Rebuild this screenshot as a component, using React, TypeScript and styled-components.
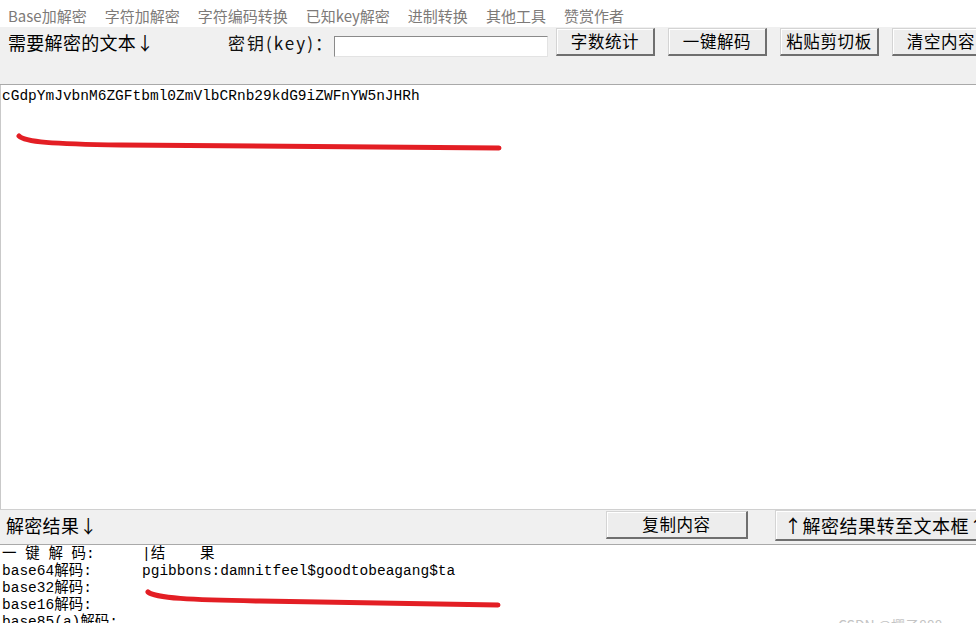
import React from "react";
import styled, { createGlobalStyle } from "styled-components";

const GlobalStyle = createGlobalStyle`
  html, body { margin: 0; padding: 0; background: #ffffff; overflow: hidden; }
  * { box-sizing: border-box; }
`;

const CJK = `"Noto Sans CJK SC", "Noto Sans", sans-serif`;
const MONO = `"Liberation Mono", "Noto Sans CJK SC", monospace`;

const Window = styled.div`
  width: 976px;
  height: 623px;
  display: flex;
  flex-direction: column;
  overflow: hidden;
  font-family: ${CJK};
  color: #000;
`;

const MenuBar = styled.nav`
  height: 27px;
  flex: 0 0 27px;
  background: #ffffff;
  display: flex;
  align-items: center;
  gap: 18px;
  padding: 3px 0 0 8px;
`;

const MenuItem = styled.span`
  font-size: 15px;
  color: #7d7a78;
  white-space: nowrap;
  line-height: 1;
`;

const ToolBar = styled.div`
  flex: 0 0 58px;
  background: #f0f0f0;
  border-bottom: 1px solid #a9a9a9;
  display: flex;
  align-items: flex-start;
  padding: 1px 0 0 8px;
  overflow: hidden;
`;

const Row = styled.div`
  height: 28px;
  display: flex;
  align-items: center;
  white-space: nowrap;
`;

const SectionLabel = styled.span<{ $w: number }>`
  flex: 0 0 ${(p) => p.$w}px;
  font-size: 18px;
  letter-spacing: 0.3px;
  line-height: 1;
  white-space: nowrap;
`;

const KeyLabel = styled.span`
  flex: 0 0 106px;
  font-size: 17px;
  letter-spacing: 2px;
  line-height: 1;
  color: #111;
`;

const KeyInput = styled.input`
  flex: 0 0 214px;
  height: 21px;
  align-self: flex-end;
  margin-bottom: -1px;
  margin-right: 8px;
  border-style: solid;
  border-width: 1px;
  border-color: #8a8a8a #e3e3e3 #e3e3e3 #8a8a8a;
  background: #fff;
  outline: none;
  padding: 0 2px;
`;

const Button = styled.button<{ $w: number; $h?: number; $gap?: number }>`
  flex: 0 0 ${(p) => p.$w}px;
  height: ${(p) => p.$h ?? 28}px;
  margin-right: ${(p) => p.$gap ?? 13}px;
  padding: 0;
  font-family: ${CJK};
  font-size: 16.5px;
  line-height: 1;
  color: #000;
  background: #ededed;
  border-style: solid;
  border-width: 1px 2px 2px 1px;
  border-color: #d4d4d4 #6f6f6f #6f6f6f #d4d4d4;
  box-shadow: inset 1px 1px 0 #ffffff;
  white-space: nowrap;
  letter-spacing: 0.6px;
`;

const WideButton = styled(Button)`
  font-size: 18px;
  text-align: left;
  padding-left: 8px;
  letter-spacing: 0.5px;
`;

const EditArea = styled.div`
  position: relative;
  flex: 1;
  background: #ffffff;
  border-left: 1px solid #c9c9c9;
  padding: 3px 0 0 1px;
  font-family: ${MONO};
  font-size: 14.5px;
  line-height: 17px;
  color: #000;
  white-space: pre;
`;

const ResultBar = styled.div`
  flex: 0 0 36px;
  background: #f0f0f0;
  border-top: 1px solid #d0d0d0;
  border-bottom: 1px solid #a9a9a9;
  display: flex;
  align-items: flex-start;
  padding: 1px 0 0 6px;
  overflow: hidden;
`;

const ResultArea = styled.div`
  position: relative;
  flex: 0 0 78px;
  background: #ffffff;
  padding: 1px 0 0 2px;
  overflow: hidden;
  font-family: ${MONO};
  font-size: 14.5px;
  line-height: 17px;
`;

const ResultLine = styled.div`
  display: grid;
  grid-template-columns: 140px auto;
  white-space: pre;
`;

const Scribble = styled.svg`
  position: absolute;
  left: 0;
  top: 0;
  pointer-events: none;
  overflow: visible;
`;

const Watermark = styled.span`
  position: absolute;
  left: 838px;
  top: 72px;
  font-family: ${CJK};
  font-size: 14px;
  color: #c4c4c4;
  white-space: nowrap;
`;

const menus = ["Base加解密", "字符加解密", "字符编码转换", "已知key解密", "进制转换", "其他工具", "赞赏作者"];

const results: [string, string][] = [
  ["一 键 解 码:", "|结    果"],
  ["base64解码:", "pgibbons:damnitfeel$goodtobeagang$ta"],
  ["base32解码:", ""],
  ["base16解码:", ""],
  ["base85(a)解码:", ""],
];

export default function App() {
  return (
    <>
      <GlobalStyle />
      <Window>
        <MenuBar>
          {menus.map((m) => (
            <MenuItem key={m}>{m}</MenuItem>
          ))}
        </MenuBar>
        <ToolBar>
          <Row>
            <SectionLabel $w={220}>需要解密的文本↓</SectionLabel>
            <KeyLabel>密钥(key)：</KeyLabel>
            <KeyInput />
            <Button $w={99}>字数统计</Button>
            <Button $w={99}>一键解码</Button>
            <Button $w={99}>粘贴剪切板</Button>
            <Button $w={99}>清空内容</Button>
          </Row>
        </ToolBar>
        <EditArea>
          cGdpYmJvbnM6ZGFtbml0ZmVlbCRnb29kdG9iZWFnYW5nJHRh
          <Scribble width="976" height="425">
            <path
              d="M18 51 C 24 57, 50 59, 120 60 L 498 63"
              fill="none"
              stroke="#e31e24"
              strokeWidth="5"
              strokeLinecap="round"
            />
          </Scribble>
        </EditArea>
        <ResultBar>
          <Row>
            <SectionLabel $w={600}>解密结果↓</SectionLabel>
            <Button $w={142} $gap={27}>复制内容</Button>
            <WideButton $w={240} $h={31} $gap={0}>↑解密结果转至文本框↑</WideButton>
          </Row>
        </ResultBar>
        <ResultArea>
          {results.map(([a, b]) => (
            <ResultLine key={a}>
              <span>{a}</span>
              <span>{b}</span>
            </ResultLine>
          ))}
          <Scribble width="976" height="78">
            <path
              d="M148 47 C 155 53, 190 55, 260 56 L 498 60"
              fill="none"
              stroke="#e31e24"
              strokeWidth="5"
              strokeLinecap="round"
            />
          </Scribble>
          <Watermark>CSDN @樱子888</Watermark>
        </ResultArea>
      </Window>
    </>
  );
}
